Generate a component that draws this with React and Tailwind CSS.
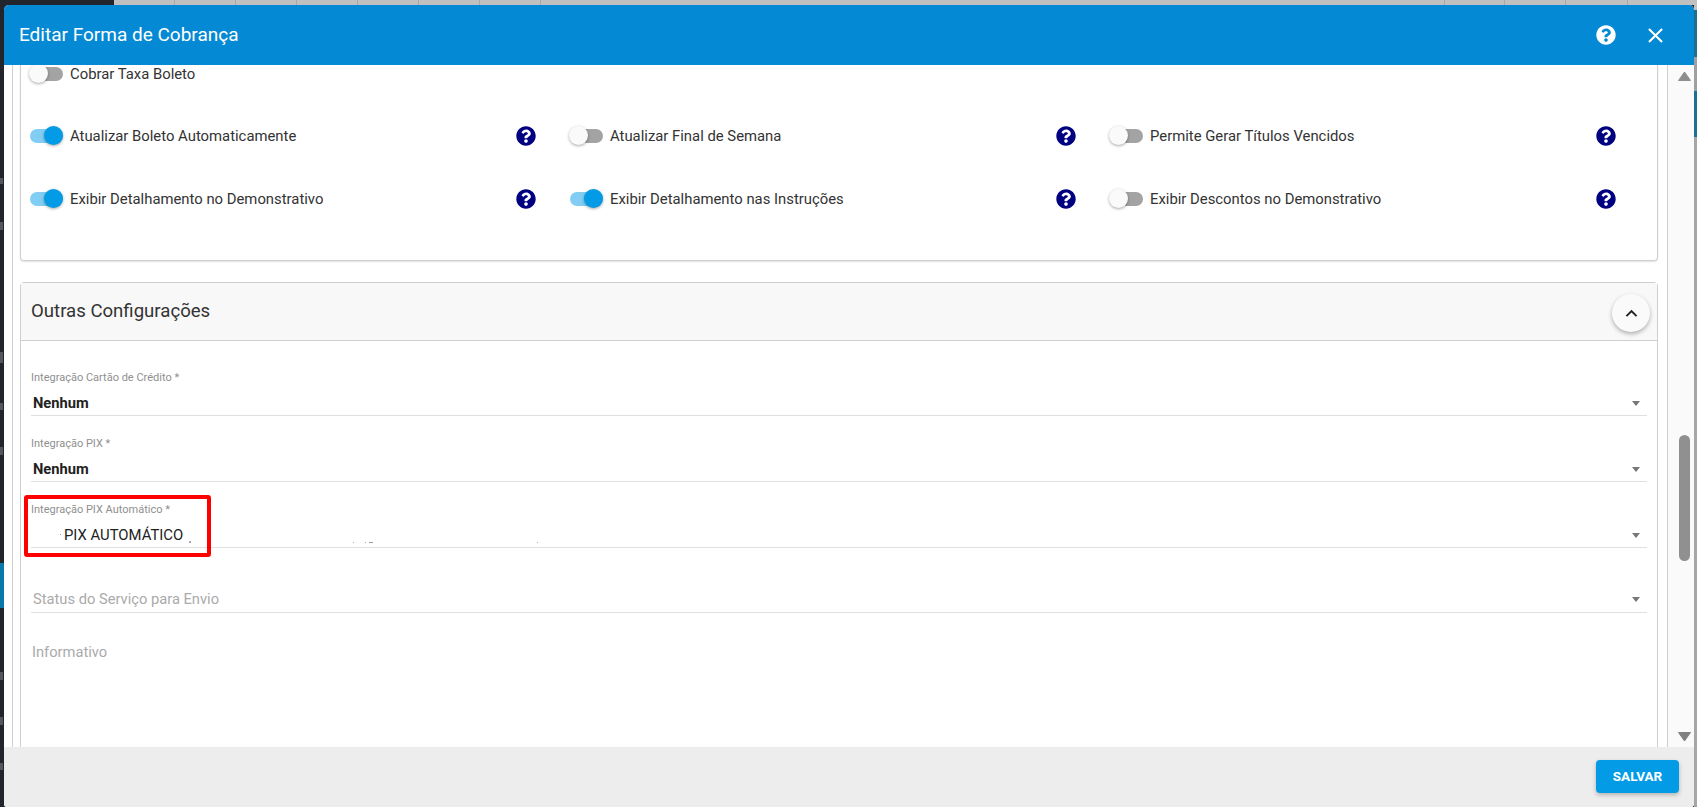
import { FaQuestionCircle } from "react-icons/fa";
import { MdClose, MdExpandLess } from "react-icons/md";

const topLines = [61, 61, 61, 61, 61, 61, 61];
const topLinesRight = [60, 61, 62];

const toggleRows = [
  [
    { label: "Atualizar Boleto Automaticamente", on: true },
    { label: "Atualizar Final de Semana", on: false },
    { label: "Permite Gerar Títulos Vencidos", on: false },
  ],
  [
    { label: "Exibir Detalhamento no Demonstrativo", on: true },
    { label: "Exibir Detalhamento nas Instruções", on: true },
    { label: "Exibir Descontos no Demonstrativo", on: false },
  ],
];

const Toggle = ({ on }) => (
  <div className={`relative h-[14px] w-[33px] shrink-0 rounded-full ${on ? "bg-[#81cdf3]" : "bg-[#a3a3a3]"}`}>
    <div
      className={`absolute top-[-3px] h-[19px] w-[19px] rounded-full shadow-[0_1px_3px_rgba(0,0,0,0.35)] ${
        on ? "left-[14px] bg-[#039be5]" : "left-[-1px] bg-[#fafafa]"
      }`}
    />
  </div>
);

const ToggleCell = ({ label, on }) => (
  <div className="flex w-[540px] items-center">
    <Toggle on={on} />
    <span className="ml-[7px] text-[14.85px] leading-[24px] text-[#333]">{label}</span>
    <FaQuestionCircle className="ml-auto mr-[34px] text-[#000080]" size={20} />
  </div>
);

const Caret = () => (
  <div className="mr-[7px] h-0 w-0 border-x-[4px] border-t-[5px] border-x-transparent border-t-[#777]" />
);

const SelectField = ({ label, value, children }) => (
  <div className="relative flex h-[66px] flex-col justify-end border-b border-[#e0e0e0]">
    <label className="mb-[6px] text-[11px] leading-[14px] text-[#8f8f8f]">{label} *</label>
    <div className="flex h-[24px] items-center justify-between">
      {value}
      <Caret />
    </div>
    {children}
  </div>
);

const App = () => {
  return (
    <div className="flex h-screen w-full flex-col overflow-hidden bg-[#23252d] font-['Roboto',sans-serif]">
      <div className="flex h-[5px] shrink-0">
        <div className="w-[114px] shrink-0 bg-[#23252d]" />
        <div className="flex flex-1 bg-[#c0c0c0]">
          {topLines.map((width, index) => (
            <div key={index} style={{ width }} className="border-r border-[#a8a8a8]" />
          ))}
          <div className="flex-1" />
          {topLinesRight.map((width, index) => (
            <div key={index} style={{ width }} className="border-l border-[#a8a8a8]" />
          ))}
          <div className="w-[70px] border-l border-[#a8a8a8]" />
        </div>
      </div>

      <div className="flex min-h-0 flex-1">
        {/* what shows of the page behind the dialog */}
        <div className="flex w-[4px] shrink-0 flex-col bg-[#23252d]">
          <div className="mt-[173px] h-[6px] w-[3px] bg-[#55575e]" />
          <div className="mt-[38px] h-[8px] w-[3px] bg-[#55575e]" />
          <div className="mt-[122px] h-[11px] w-[3px] bg-[#55575e]" />
          <div className="mt-[40px] h-[7px] w-[3px] bg-[#55575e]" />
          <div className="mt-[37px] h-[8px] w-[3px] bg-[#55575e]" />
          <div className="mt-[108px] h-[45px] bg-[#0a77ad]" />
          <div className="mt-[64px] h-[8px] w-[3px] bg-[#55575e]" />
          <div className="mt-[37px] h-[8px] w-[3px] bg-[#55575e]" />
          <div className="mt-[38px] h-[7px] w-[3px] bg-[#55575e]" />
        </div>

        <div className="flex min-w-0 flex-1 flex-col overflow-hidden rounded-t-[5px] rounded-b-[3px] bg-white">
          <header className="flex h-[60px] shrink-0 items-center bg-[#0489d4] pl-[15px] text-white">
            <h1 className="text-[19px] font-normal leading-[58px]">Editar Forma de Cobrança</h1>
            <FaQuestionCircle className="ml-auto" size={20} />
            <MdClose className="ml-[27px] mr-[26px]" size={25} />
          </header>

          <div className="flex min-h-0 flex-1 pl-[8px]">
            <div className="min-w-0 flex-1 overflow-hidden border-x border-[#cfcfcf] pl-[7px] pr-[9px]">
              <section className="h-[196px] rounded-b-[4px] border-x border-b border-[#cfcfcf] pl-[9px] shadow-[0_1px_2px_rgba(0,0,0,0.12)]">
                <div className="flex h-[18px] items-center">
                  <Toggle on={false} />
                  <span className="ml-[7px] text-[14.85px] leading-[24px] text-[#333]">Cobrar Taxa Boleto</span>
                </div>
                <div className="mt-[41px] flex h-[24px]">
                  {toggleRows[0].map((cell) => (
                    <ToggleCell key={cell.label} {...cell} />
                  ))}
                </div>
                <div className="mt-[39px] flex h-[24px]">
                  {toggleRows[1].map((cell) => (
                    <ToggleCell key={cell.label} {...cell} />
                  ))}
                </div>
              </section>

              <section className="mt-[21px] rounded-t-[4px] border border-[#cfcfcf] pb-[100px]">
                <div className="flex h-[58px] items-center justify-between border-b border-[#cfcfcf] bg-[#f8f8f8] pl-[10px] pr-[7px]">
                  <h2 className="text-[18.6px] font-normal text-[#333]">Outras Configurações</h2>
                  <button
                    type="button"
                    className="mt-[3px] flex h-[38px] w-[38px] items-center justify-center rounded-full bg-[#fafafa] text-[#222] shadow-[0_2px_4px_rgba(0,0,0,0.3)]"
                  >
                    <MdExpandLess size={23} />
                  </button>
                </div>

                <div className="px-[10px] pt-[9px]">
                  <SelectField
                    label="Integração Cartão de Crédito"
                    value={<span className="pl-[2px] text-[14.7px] font-bold text-[#222]">Nenhum</span>}
                  />
                  <SelectField
                    label="Integração PIX"
                    value={<span className="pl-[2px] text-[14.7px] font-bold text-[#222]">Nenhum</span>}
                  />
                  <SelectField
                    label="Integração PIX Automático"
                    value={<span className="pl-[33px] text-[14.85px] text-[#222]">PIX AUTOMÁTICO</span>}
                  >
                    <div className="absolute left-[-7px] top-[13px] h-[62px] w-[187px] rounded-[3px] border-[4px] border-[#ff0000]" />
                    <i className="absolute left-[29px] top-[52px] h-px w-px bg-[#999]" />
                    <i className="absolute left-[158px] top-[59px] h-[2px] w-[2px] bg-[#aaa]" />
                    <i className="absolute left-[322px] top-[60px] h-px w-px bg-[#aaa]" />
                    <i className="absolute left-[334px] top-[60px] h-px w-px bg-[#aaa]" />
                    <i className="absolute left-[338px] top-[60px] h-px w-[4px] bg-[#999]" />
                    <i className="absolute left-[506px] top-[60px] h-px w-px bg-[#aaa]" />
                  </SelectField>
                  <div className="flex h-[65px] flex-col justify-end border-b border-[#e0e0e0] pb-px">
                    <div className="flex h-[24px] items-center justify-between">
                      <span className="pl-[2px] text-[14.7px] text-[#aaa]">Status do Serviço para Envio</span>
                      <Caret />
                    </div>
                  </div>
                  <p className="mt-[27px] pl-[1px] text-[14.7px] leading-[24px] text-[#aaa]">Informativo</p>
                </div>
              </section>
            </div>

            <div className="flex w-[26px] shrink-0 flex-col items-center bg-[#fafafa] pb-[5px] pl-[7px] pt-[6px]">
              <svg width="13" height="10" viewBox="0 0 13 10">
                <path d="M6.5 1L12.5 9.5H0.5Z" fill="#8e8e8e" stroke="#8e8e8e" strokeLinejoin="round" />
              </svg>
              <div className="mt-[354px] h-[126px] w-[11px] rounded-full bg-[#909090]" />
              <svg className="mt-auto" width="13" height="10" viewBox="0 0 13 10">
                <path d="M6.5 9L12.5 0.5H0.5Z" fill="#808080" stroke="#808080" strokeLinejoin="round" />
              </svg>
            </div>
          </div>

          <footer className="flex h-[60px] shrink-0 items-start justify-end bg-[#ededed] pr-[15px] pt-[13px]">
            <button
              type="button"
              className="h-[33px] w-[83px] rounded-[4px] bg-[#039be5] text-[13.5px] font-bold text-white shadow-[0_2px_4px_rgba(0,0,0,0.25)]"
            >
              SALVAR
            </button>
          </footer>
        </div>

        <div className="flex w-[3px] shrink-0 flex-col bg-[#a6a6a6]">
          <div className="h-[5px] bg-[#c0c0c0]" />
          <div className="h-[47px] bg-[#1f6f8f]" />
          <div className="h-[34px] bg-[#a0a0a0]" />
          <div className="h-[46px] bg-[#1c6f96]" />
        </div>
      </div>
    </div>
  );
};

export default App;
